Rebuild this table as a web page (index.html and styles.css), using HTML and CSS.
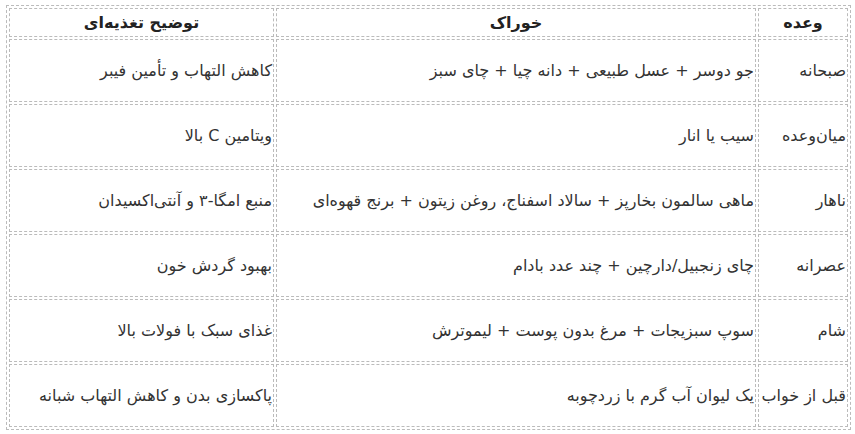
FILE: index.html
```html
<!DOCTYPE html>
<html lang="fa" dir="rtl">
<head>
<meta charset="utf-8">
<link rel="stylesheet" href="styles.css">
</head>
<body>
<table class="meal-table">
  <colgroup>
    <col class="col-meal">
    <col class="col-food">
    <col class="col-note">
  </colgroup>
  <thead>
    <tr>
      <th>وعده</th>
      <th>خوراک</th>
      <th>توضیح تغذیه‌ای</th>
    </tr>
  </thead>
  <tbody>
    <tr>
      <td>صبحانه</td>
      <td>جو دوسر + عسل طبیعی + دانه چیا + چای سبز</td>
      <td>کاهش التهاب و تأمین فیبر</td>
    </tr>
    <tr>
      <td>میان‌وعده</td>
      <td>سیب یا انار</td>
      <td>ویتامین C بالا</td>
    </tr>
    <tr>
      <td>ناهار</td>
      <td>ماهی سالمون بخارپز + سالاد اسفناج، روغن زیتون + برنج قهوه‌ای</td>
      <td>منبع امگا-۳ و آنتی‌اکسیدان</td>
    </tr>
    <tr>
      <td>عصرانه</td>
      <td>چای زنجبیل/دارچین + چند عدد بادام</td>
      <td>بهبود گردش خون</td>
    </tr>
    <tr>
      <td>شام</td>
      <td>سوپ سبزیجات + مرغ بدون پوست + لیموترش</td>
      <td>غذای سبک با فولات بالا</td>
    </tr>
    <tr>
      <td>قبل از خواب</td>
      <td>یک لیوان آب گرم با زردچوبه</td>
      <td>پاکسازی بدن و کاهش التهاب شبانه</td>
    </tr>
  </tbody>
</table>
</body>
</html>
```
FILE: styles.css
```css
html, body {
  margin: 0;
  padding: 0;
  background: #ffffff;
}

body {
  padding: 5px 4px 0 7px;
  font-family: "DejaVu Sans", sans-serif;
  font-size: 16px;
  color: #333333;
}

.meal-table {
  width: 845px;
  border-collapse: separate;
  border-spacing: 2px;
  border: 1px dashed #bbbbbb;
  table-layout: fixed;
}

.col-meal { width: 90px; }
.col-food { width: 480px; }
.col-note { width: 265px; }

.meal-table th,
.meal-table td {
  border: 1px dashed #bbbbbb;
  padding: 0 1px;
  vertical-align: middle;
}

.meal-table th {
  height: 27px;
  font-weight: bold;
  text-align: center;
  color: #222222;
}

.meal-table td {
  height: 61px;
  text-align: right;
}
```
